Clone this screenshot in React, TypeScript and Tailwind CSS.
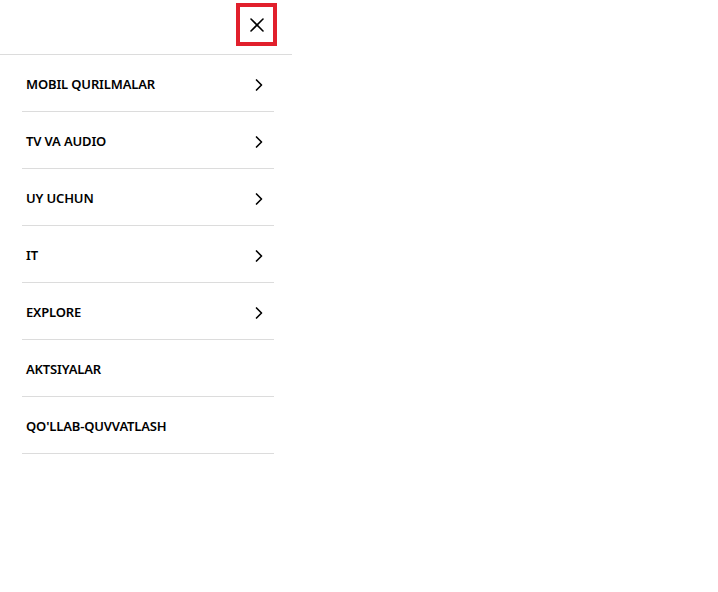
import React from 'react';
import { X, ChevronRight } from 'lucide-react';

const items = [
  { label: 'MOBIL QURILMALAR', sub: true },
  { label: 'TV VA AUDIO', sub: true },
  { label: 'UY UCHUN', sub: true },
  { label: 'IT', sub: true },
  { label: 'EXPLORE', sub: true },
  { label: 'AKTSIYALAR', sub: false },
  { label: "QO'LLAB-QUVVATLASH", sub: false },
];

export default function App() {
  return (
    <div className="min-h-[592px] w-full bg-white" style={{ fontFamily: '"Noto Sans", Arial, sans-serif' }}>
      <nav className="w-[292px] bg-white">
        {/* Header */}
        <div className="flex h-[55px] items-start justify-end border-b border-[#dcdcdc] pr-[15px] pt-[3px]">
          <button
            className="flex h-[43px] w-[41px] items-center justify-center border-4 border-[#e1202c] text-black"
            aria-label="Close menu"
          >
            <X className="h-6 w-6" strokeWidth={1.6} />
          </button>
        </div>

        {/* Menu list */}
        <ul className="pl-[22px] pr-[18px]">
          {items.map((item) => (
            <li
              key={item.label}
              className="flex h-[57px] items-center justify-between border-b border-[#dcdcdc] pl-1 pr-[5px] pt-[3px]"
            >
              <span className="text-[13px] font-semibold tracking-[-0.15px] text-black">{item.label}</span>
              {item.sub && <ChevronRight className="h-5 w-5 text-black" strokeWidth={2} />}
            </li>
          ))}
        </ul>
      </nav>
    </div>
  );
}
